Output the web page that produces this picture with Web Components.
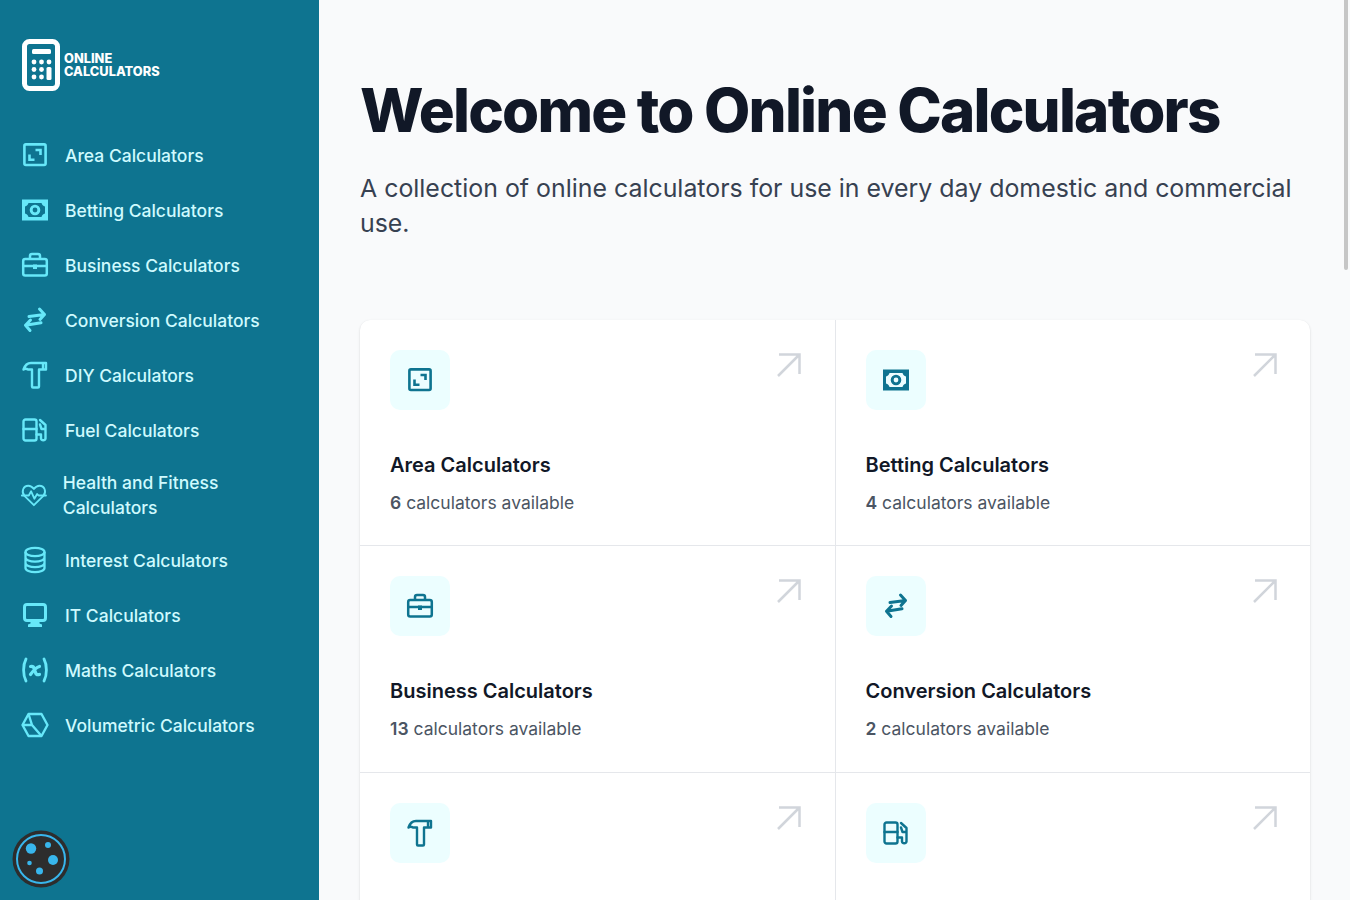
<!DOCTYPE html>
<html lang="en">
<head>
<meta charset="utf-8">
<title>Online Calculators</title>
<style>
    html, body { margin: 0; height: 100%; overflow: hidden; }
    body { font-family: Inter, "Liberation Sans", sans-serif; background: #f9fafb; }
</style>
</head>
<body>
<calc-app>
    <side-bar slot="side">
        <nav-item icon="area">Area Calculators</nav-item>
        <nav-item icon="betting">Betting Calculators</nav-item>
        <nav-item icon="business">Business Calculators</nav-item>
        <nav-item icon="conversion">Conversion Calculators</nav-item>
        <nav-item icon="diy">DIY Calculators</nav-item>
        <nav-item icon="fuel">Fuel Calculators</nav-item>
        <nav-item icon="health">Health and Fitness Calculators</nav-item>
        <nav-item icon="interest">Interest Calculators</nav-item>
        <nav-item icon="it">IT Calculators</nav-item>
        <nav-item icon="maths">Maths Calculators</nav-item>
        <nav-item icon="volume">Volumetric Calculators</nav-item>
    </side-bar>
    <calc-home>
        <span slot="title">Welcome to Online Calculators</span>
        <span slot="intro">A collection of online calculators for use in every day domestic and commercial use.</span>
        <calc-card icon="area" count="6">Area Calculators</calc-card>
        <calc-card icon="betting" count="4">Betting Calculators</calc-card>
        <calc-card icon="business" count="13">Business Calculators</calc-card>
        <calc-card icon="conversion" count="2">Conversion Calculators</calc-card>
        <!-- third row is cut by the fold, only the icons show -->
        <calc-card icon="diy" aria-label="DIY Calculators"></calc-card>
        <calc-card icon="fuel" aria-label="Fuel Calculators"></calc-card>
    </calc-home>
    <cookie-button></cookie-button>
</calc-app>

<script>
// all icons are drawn on a 30x30 box
const ICONS = {
    area: `<rect x="4.4" y="4.4" width="21.2" height="20.6" rx="1.5" fill="none" stroke="currentColor" stroke-width="2.6"/>
           <path d="M15.5 10h5v5M9.5 14.5v5.2h5" fill="none" stroke="currentColor" stroke-width="2.6"/>`,
    betting: `<path fill-rule="evenodd" fill="currentColor" d="M2 4.5h26v21H2zM8.5 8C8 9.8 6.800 11 5 11.500v7C6.800 19 8 20.200 8.500 22h13c.5-1.800 1.700-3 3.500-3.500v-7C23.200 11 22 9.800 21.500 8zM15 9.700a5.300 5.300 0 1 1 0 10.600a5.300 5.300 0 0 1 0-10.600zM15 12.600a2.400 2.400 0 1 0 0 4.800a2.400 2.400 0 0 0 0-4.800z"/>`,
    business: `<g fill="none" stroke="currentColor" stroke-width="2.500" stroke-linejoin="round">
               <rect x="3.200" y="9" width="23.600" height="16.500" rx="2"/>
               <path d="M10 9V6A2 2 0 0 1 12 4h6a2 2 0 0 1 2 2V9M3 16h24"/></g>
               <rect x="13" y="14.500" width="4" height="4.500" fill="currentColor"/>`,
    conversion: `<g fill="none" stroke="currentColor" stroke-width="3" stroke-linecap="round" stroke-linejoin="round">
               <path d="M9 11.500L24.500 9.500M19.500 4L24.500 9.500L20 14.500M21 17.800L5.500 20.300M10.500 15L5.500 20.300L10 25.500"/></g>`,
    diy: `<path fill="none" stroke="currentColor" stroke-width="2.400" stroke-linejoin="round" d="M3.500 9.500C5 5 8 3 11 3H26V9.500H19V26.500A1 1 0 0 1 18 27.500H13A1 1 0 0 1 12 26.500V9.500H8C6.500 8.500 5 8.500 3.500 9.500ZM23 3V9.500"/>`,
    fuel: `<g fill="none" stroke="currentColor" stroke-width="2.400" stroke-linejoin="round" stroke-linecap="round">
               <rect x="3.500" y="4.500" width="13" height="21" rx="2"/>
               <path d="M3.500 14H16.500M20 5L25.500 10V23.500A2.300 2.300 0 0 1 21 23.500V19.500H16.500M20 9.500L21.500 14H25"/></g>`,
    health: `<g fill="none" stroke="currentColor" stroke-width="2" stroke-linejoin="round" stroke-linecap="round">
               <path d="M15 26L4.800 16C1 11.500 3.500 5 9 5C11.500 5 13.500 6.500 15 8.500C16.500 6.500 18.500 5 21 5C26.500 5 29 11.500 25.200 16Z"/>
               <path d="M2 15.500H9.500L12 11L15.500 19L18.500 14L20 15.500H28"/></g>`,
    interest: `<g fill="none" stroke="currentColor" stroke-width="2.300">
               <ellipse cx="15" cy="7" rx="9.500" ry="4.200"/>
               <path d="M5.500 7V23C5.500 25.500 10 27.200 15 27.200S24.500 25.500 24.500 23V7M5.500 12.500C5.500 15 10 16.700 15 16.700S24.500 15 24.500 12.500M5.500 18C5.500 20.500 10 22.200 15 22.200S24.500 20.500 24.500 18"/></g>`,
    it: `<rect x="4.500" y="4.500" width="21" height="16" rx="2.500" fill="none" stroke="currentColor" stroke-width="3"/>
         <path fill="currentColor" d="M10.500 21h9v2.500l2.500 1V27H8v-2.500l2.500-1z"/>`,
    maths: `<g fill="none" stroke="currentColor" stroke-linecap="round">
               <path stroke-width="2.800" d="M6 4C2.800 10 2.800 20 6 26M24 4C27.200 10 27.200 20 24 26"/>
               <path stroke-width="3.200" d="M10.500 11.500C13 11 14 12 14.500 14.500L15.500 17.500C16 19.500 17.500 20 19.500 19.500M19.500 11.500C16 12.500 13 16 10.500 19.500"/></g>`,
    volume: `<g fill="none" stroke="currentColor" stroke-width="2.400" stroke-linejoin="round">
               <path d="M8.500 4H21.500L27.500 15L21.500 26H8.500L2.500 15Z"/>
               <path d="M8.500 4L12 15H2.500M12 15L21.500 26"/></g>`
};

class CalcIcon extends HTMLElement {
    connectedCallback() {
        const name = this.getAttribute('name');
        this.attachShadow({ mode: 'open' }).innerHTML = `
        <style>
            :host { display: block; width: 30px; height: 30px; }
            svg { display: block; width: 100%; height: 100%; }
        </style>
        <svg viewBox="0 0 30 30" aria-hidden="true">${ICONS[name] || ''}</svg>`;
    }
}

class NavItem extends HTMLElement {
    connectedCallback() {
        this.attachShadow({ mode: 'open' }).innerHTML = `
        <style>
            :host { display: block; }
            a {
                display: flex;
                align-items: center;
                gap: 15px;
                padding: 12.5px 0;
                color: #cffafe;
                font-size: 17.5px;
                font-weight: 500;
                line-height: 25px;
                text-decoration: none;
            }
            calc-icon { color: #67e8f9; }
        </style>
        <a href="#"><calc-icon name="${this.getAttribute('icon')}"></calc-icon><span><slot></slot></span></a>`;
    }
}

class SideBar extends HTMLElement {
    constructor() {
        super();
        this.attachShadow({ mode: 'open' }).innerHTML = `
        <style>
            :host { display: block; height: 100%; background: #0e7490; box-sizing: border-box; padding: 39px 20px 0 22px; }
            .logo { display: flex; align-items: center; gap: 4px; margin-bottom: 36.5px; color: #fff; }
            .logo svg { display: block; width: 38px; height: 52px; flex: none; }
            .name { font-size: 12.8px; font-weight: 800; line-height: 13px; text-transform: uppercase; margin-top: -1px; }
            nav { margin-left: -2px; }
        </style>
        <div class="logo">
            <svg viewBox="0 0 38 52" fill="currentColor">
                <rect x="2.500" y="2.500" width="33" height="47" rx="5" fill="none" stroke="currentColor" stroke-width="5"/>
                <rect x="10" y="10" width="19" height="5" rx="1.500"/>
                <circle cx="12" cy="23" r="2.400"/><circle cx="19.500" cy="23" r="2.400"/><circle cx="27" cy="23" r="2.400"/>
                <circle cx="12" cy="30.500" r="2.400"/><circle cx="19.500" cy="30.500" r="2.400"/>
                <circle cx="12" cy="38" r="2.400"/><circle cx="19.500" cy="38" r="2.400"/>
                <rect x="24.500" y="28" width="5" height="13" rx="1.500"/>
            </svg>
            <div class="name">Online<br>Calculators</div>
        </div>
        <nav><slot></slot></nav>`;
    }
}

class CalcCard extends HTMLElement {
    connectedCallback() {
        const count = this.getAttribute('count');
        this.attachShadow({ mode: 'open' }).innerHTML = `
        <style>
            :host { display: block; background: #fff; box-sizing: border-box; padding: 30px 30px 28px; overflow: hidden; }
            .top { display: flex; justify-content: space-between; align-items: flex-start; }
            .box { width: 60px; height: 60px; border-radius: 10px; background: #ecfeff; color: #0e7490; display: flex; align-items: center; justify-content: center; }
            .arrow { display: block; width: 24px; height: 24px; margin: 3px 3.4px 0 0; color: #d1d5db; }
            h3 { margin: 41px 0 10px; color: #111827; font-size: 20px; font-weight: 600; line-height: 28px; }
            p { margin: 0; color: #4b5563; font-size: 17.5px; line-height: 28px; }
            b { font-weight: 600; }
        </style>
        <div class="top">
            <div class="box"><calc-icon name="${this.getAttribute('icon')}"></calc-icon></div>
            <svg class="arrow" viewBox="0 0 24 24" fill="none" stroke="currentColor" stroke-width="2.500"><path d="M1 23L22.500 1.500M2 1.500H22.500V21"/></svg>
        </div>
        <h3><slot></slot></h3>
        ${count ? `<p><b>${count}</b> calculators available</p>` : ''}`;
    }
}

class CalcHome extends HTMLElement {
    constructor() {
        super();
        this.attachShadow({ mode: 'open' }).innerHTML = `
        <style>
            :host { display: block; height: 100%; box-sizing: border-box; padding: 40px 40px 0 41px; overflow: hidden; background: #f9fafb; }
            h1 { margin: 0; color: #111827; font-size: 60px; font-weight: 800; line-height: 72px; letter-spacing: -1.8px; padding-top: 34px; }
            p { margin: 25px 0 78.75px; color: #374151; font-size: 24.9px; line-height: 35px; }
            .grid {
                display: grid;
                grid-template-columns: 1fr 1fr;
                grid-auto-rows: 225.500px;
                gap: 1px;
                background: #e5e7eb;
                border-radius: 10px;
                overflow: hidden;
                box-shadow: 0 1px 3px rgba(0, 0, 0, .1), 0 1px 2px rgba(0, 0, 0, .06);
            }
        </style>
        <h1><slot name="title"></slot></h1>
        <p><slot name="intro"></slot></p>
        <div class="grid"><slot></slot></div>`;
    }
}

class CookieButton extends HTMLElement {
    constructor() {
        super();
        this.attachShadow({ mode: 'open' }).innerHTML = `
        <style>
            :host { position: absolute; left: 12px; bottom: 12px; width: 58px; height: 58px; }
            svg { display: block; width: 100%; height: 100%; }
        </style>
        <svg viewBox="0 0 58 58">
            <circle cx="29" cy="29" r="28.500" fill="#2d2d2d"/>
            <circle cx="29" cy="29" r="24" fill="none" stroke="#38b6ec" stroke-width="2"/>
            <g fill="#38b6ec">
                <circle cx="19" cy="18.500" r="5.200"/><circle cx="36" cy="15" r="3"/><circle cx="41" cy="30" r="5"/>
                <circle cx="17.500" cy="33" r="2.300"/><circle cx="27.500" cy="41" r="3.500"/>
            </g>
        </svg>`;
    }
}

class CalcApp extends HTMLElement {
    constructor() {
        super();
        this.attachShadow({ mode: 'open' }).innerHTML = `
        <style>
            :host { display: grid; grid-template-columns: 319px 1fr; position: relative; height: 100vh; overflow: hidden; }
            .thumb { position: absolute; top: 0; right: 2px; width: 4px; height: 270px; border-radius: 0 0 2px 2px; background: #c6c6c6; }
        </style>
        <slot name="side"></slot>
        <slot></slot>
        <div class="thumb"></div>`;
    }
}

customElements.define('calc-icon', CalcIcon);
customElements.define('nav-item', NavItem);
customElements.define('side-bar', SideBar);
customElements.define('calc-card', CalcCard);
customElements.define('calc-home', CalcHome);
customElements.define('cookie-button', CookieButton);
customElements.define('calc-app', CalcApp);
</script>
</body>
</html>
